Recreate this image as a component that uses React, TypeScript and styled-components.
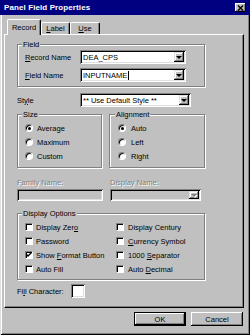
import styled, { createGlobalStyle } from 'styled-components';

const GlobalStyle = createGlobalStyle`
  html, body {
    margin: 0;
    padding: 0;
    background: #c0c0c0;
  }
  body {
    font-family: "Liberation Sans", Arial, sans-serif;
    font-size: 7.5px;
    color: #000;
  }
`;

const Window = styled.div`
  width: 250px;
  height: 335px;
  box-sizing: border-box;
  background: #c0c0c0;
  display: flex;
  flex-direction: column;
  overflow: hidden;
  box-shadow: inset 1px 0 #dfdfdf, inset -1px -1px #000, inset 2px 0 #fff, inset -2px -2px #808080;
`;

const TitleBar = styled.div`
  height: 15px;
  flex: none;
  background: #000080;
  display: flex;
  align-items: center;
  justify-content: space-between;
  padding: 0 4px 0 4px;
`;

const Title = styled.span`
  color: #fff;
  font-weight: bold;
  font-size: 8px;
  letter-spacing: 0.1px;
`;

const CloseButton = styled.div`
  width: 11px;
  height: 9px;
  background: #c0c0c0;
  display: flex;
  align-items: center;
  justify-content: center;
  box-shadow: inset -1px -1px #000, inset 1px 1px #fff, inset -2px -2px #808080;
`;

const Content = styled.div`
  flex: 1;
  display: flex;
  flex-direction: column;
  padding: 0 6px 0 4px;
`;

const TabStrip = styled.div`
  display: flex;
  align-items: flex-end;
  height: 15px;
  margin-top: 4px;
  padding-left: 3px;
`;

const Tab = styled.div<{ $active?: boolean; $w: number }>`
  width: ${(p) => p.$w}px;
  height: ${(p) => (p.$active ? 16 : 12)}px;
  margin-bottom: ${(p) => (p.$active ? -1 : 0)}px;
  box-sizing: border-box;
  background: #c0c0c0;
  border-top: 1px solid #fff;
  border-left: 1px solid #fff;
  border-right: 1px solid #000;
  border-radius: 2px 2px 0 0;
  box-shadow: inset -1px 0 #808080;
  display: flex;
  align-items: ${(p) => (p.$active ? 'flex-start' : 'center')};
  padding-top: ${(p) => (p.$active ? 3 : 0)}px;
  justify-content: center;
  z-index: ${(p) => (p.$active ? 1 : 0)};
`;

const Panel = styled.div`
  height: 274px;
  box-sizing: border-box;
  border-top: 1px solid #fff;
  border-left: 1px solid #fff;
  border-right: 1px solid #000;
  border-bottom: 1px solid #000;
  box-shadow: inset -1px -1px #808080;
  padding: 0 0 0 12px;
  display: flex;
  flex-direction: column;
`;

const GroupBox = styled.fieldset<{ $w: number; $pad: string; $mt: number }>`
  margin: ${(p) => p.$mt}px 0 0 0;
  width: ${(p) => p.$w}px;
  min-width: 0;
  box-sizing: border-box;
  padding: ${(p) => p.$pad};
  border: 1px solid #808080;
  box-shadow: inset 1px 1px #fff, 1px 1px #fff;
`;

const Legend = styled.legend`
  padding: 0 1px;
  margin-left: -3px;
  line-height: 9px;
  height: 9px;
  background: #c0c0c0;
`;

const FieldRow = styled.div`
  display: flex;
  align-items: center;
  height: 14px;
  & + & {
    margin-top: 4px;
  }
`;

const RowLabel = styled.span<{ $w: number }>`
  width: ${(p) => p.$w}px;
  flex: none;
`;

const Sunken = styled.div<{ $w: number; $h?: number; $disabled?: boolean }>`
  width: ${(p) => p.$w}px;
  height: ${(p) => p.$h ?? 14}px;
  flex: none;
  box-sizing: border-box;
  background: ${(p) => (p.$disabled ? '#c0c0c0' : '#fff')};
  box-shadow: inset 1px 1px #808080, inset -1px -1px #fff, inset 2px 2px #000, inset -2px -2px #dfdfdf;
  display: flex;
  align-items: center;
  padding-left: 3px;
  overflow: hidden;
  white-space: nowrap;
`;

const ComboText = styled.span`
  flex: 1;
  overflow: hidden;
  display: flex;
  align-items: center;
`;

const Caret = styled.span`
  display: inline-block;
  width: 1px;
  height: 9px;
  background: #000;
  margin-left: 1px;
`;

const DropButton = styled.div<{ $disabled?: boolean; $h?: number }>`
  width: 10px;
  height: ${(p) => p.$h ?? 10}px;
  flex: none;
  margin-right: 2px;
  background: #c0c0c0;
  box-shadow: inset -1px -1px #000, inset 1px 1px #dfdfdf, inset -2px -2px #808080, inset 2px 2px #fff;
  display: flex;
  align-items: center;
  justify-content: center;
  &::after {
    content: "";
    width: 0;
    height: 0;
    border-left: 3px solid transparent;
    border-right: 3px solid transparent;
    border-top: 3px solid ${(p) => (p.$disabled ? '#808080' : '#000')};
    filter: ${(p) => (p.$disabled ? 'drop-shadow(1px 1px 0 #fff)' : 'none')};
  }
`;

const StyleRow = styled.div`
  display: flex;
  align-items: center;
  height: 14px;
  margin-top: 6px;
`;

const TwoCol = styled.div<{ $mt: number }>`
  display: flex;
  gap: 7px;
  margin-top: ${(p) => p.$mt}px;
`;

const Option = styled.div<{ $gap?: number }>`
  display: flex;
  align-items: center;
  height: 14px;
  gap: ${(p) => p.$gap ?? 4}px;
  white-space: nowrap;
`;

const Radio = styled.span<{ $on?: boolean }>`
  width: 8px;
  height: 8px;
  flex: none;
  box-sizing: border-box;
  border-radius: 50%;
  background: #fff;
  border: 1px solid;
  border-color: #808080 #fff #fff #808080;
  box-shadow: inset 1px 1px #000;
  display: flex;
  align-items: center;
  justify-content: center;
  &::after {
    content: "";
    width: 3px;
    height: 3px;
    border-radius: 50%;
    background: ${(p) => (p.$on ? '#000' : 'transparent')};
  }
`;

const Check = styled.span`
  width: 8px;
  height: 8px;
  flex: none;
  box-sizing: border-box;
  background: #fff;
  border: 1px solid;
  border-color: #808080 #fff #fff #808080;
  box-shadow: inset 1px 1px #000;
  display: flex;
  align-items: center;
  justify-content: center;
`;

const NameCol = styled.div<{ $w: number }>`
  width: ${(p) => p.$w}px;
  display: flex;
  flex-direction: column;
  gap: 2px;
`;

const Disabled = styled.span`
  color: #808080;
  text-shadow: 1px 1px 0 #fff;
  line-height: 9px;
  height: 9px;
`;

const OptionGrid = styled.div`
  display: grid;
  grid-template-columns: 91px 1fr;
  grid-auto-rows: 14px;
`;

const FillRow = styled.div`
  display: flex;
  align-items: center;
  height: 14px;
  margin-top: 4px;
`;

const ButtonRow = styled.div`
  display: flex;
  justify-content: flex-end;
  gap: 5px;
  margin-top: 4px;
  padding-right: 1px;
`;

const Button = styled.div<{ $default?: boolean }>`
  width: 52px;
  height: 14px;
  box-sizing: border-box;
  background: #c0c0c0;
  display: flex;
  align-items: center;
  justify-content: center;
  border: ${(p) => (p.$default ? '1px solid #000' : 'none')};
  box-shadow: inset -1px -1px #000, inset 1px 1px #fff, inset -2px -2px #808080;
`;

const CheckMark = () => (
  <svg width="6" height="6" viewBox="0 0 6 6">
    <polyline points="0.5,2.5 2,4 5.5,0.5" fill="none" stroke="#000" strokeWidth="1.4" />
  </svg>
);

const CloseGlyph = () => (
  <svg width="7" height="6" viewBox="0 0 7 6">
    <path d="M1 0.5 L6 5.5 M6 0.5 L1 5.5" stroke="#000" strokeWidth="1.4" />
  </svg>
);

const sizes = ['Average', 'Maximum', 'Custom'];
const aligns = ['Auto', 'Left', 'Right'];

const options: { label: React.ReactNode; on?: boolean }[] = [
  { label: <>Display Zer<u>o</u></> },
  { label: <>Display Century</> },
  { label: <>Password</> },
  { label: <><u>C</u>urrency Symbol</> },
  { label: <>Show <u>F</u>ormat Button</>, on: true },
  { label: <>1000 <u>S</u>eparator</> },
  { label: <>Auto Fill</> },
  { label: <>Auto <u>D</u>ecimal</> },
];

export default function App() {
  return (
    <>
      <GlobalStyle />
      <Window>
        <TitleBar>
          <Title>Panel Field Properties</Title>
          <CloseButton>
            <CloseGlyph />
          </CloseButton>
        </TitleBar>
        <Content>
          <TabStrip>
            <Tab $active $w={34}>Record</Tab>
            <Tab $w={29}><u>L</u>abel</Tab>
            <Tab $w={30}><u>U</u>se</Tab>
          </TabStrip>
          <Panel>
            <GroupBox $w={188} $pad="1px 7px 4px 7px" $mt={5}>
              <Legend>Field</Legend>
              <FieldRow>
                <RowLabel $w={55}><u>R</u>ecord Name</RowLabel>
                <Sunken $w={106}>
                  <ComboText>DEA_CPS</ComboText>
                  <DropButton />
                </Sunken>
              </FieldRow>
              <FieldRow>
                <RowLabel $w={55}><u>F</u>ield Name</RowLabel>
                <Sunken $w={106}>
                  <ComboText>INPUTNAME<Caret /></ComboText>
                  <DropButton />
                </Sunken>
              </FieldRow>
            </GroupBox>

            <StyleRow>
              <RowLabel $w={63}>St<u>y</u>le</RowLabel>
              <Sunken $w={111}>
                <ComboText>** Use Default Style **</ComboText>
                <DropButton />
              </Sunken>
            </StyleRow>

            <TwoCol $mt={3}>
              <GroupBox $w={85} $pad="2px 7px 4px 7px" $mt={0}>
                <Legend>Size</Legend>
                {sizes.map((s, i) => (
                  <Option key={s}>
                    <Radio $on={i === 0} />
                    {s}
                  </Option>
                ))}
              </GroupBox>
              <GroupBox $w={96} $pad="2px 8px 4px 8px" $mt={0}>
                <Legend>Alignment</Legend>
                {aligns.map((s, i) => (
                  <Option key={s} $gap={5}>
                    <Radio $on={i === 0} />
                    {s}
                  </Option>
                ))}
              </GroupBox>
            </TwoCol>

            <TwoCol $mt={10}>
              <NameCol $w={86}>
                <Disabled>Family Name:</Disabled>
                <Sunken $w={86} $h={12} $disabled />
              </NameCol>
              <NameCol $w={91}>
                <Disabled>Display Name:</Disabled>
                <Sunken $w={91} $h={12} $disabled>
                  <ComboText />
                  <DropButton $disabled $h={8} />
                </Sunken>
              </NameCol>
            </TwoCol>

            <GroupBox $w={188} $pad="2px 7px 3px 7px" $mt={8}>
              <Legend>Display Options</Legend>
              <OptionGrid>
                {options.map((o, i) => (
                  <Option key={i} $gap={i % 2 === 0 ? 3 : 4}>
                    <Check>{o.on && <CheckMark />}</Check>
                    <span>{o.label}</span>
                  </Option>
                ))}
              </OptionGrid>
            </GroupBox>

            <FillRow>
              <RowLabel $w={54}>Fi<u>l</u>l Character:</RowLabel>
              <Sunken $w={14} />
            </FillRow>
          </Panel>
          <ButtonRow>
            <Button $default>OK</Button>
            <Button>Cancel</Button>
          </ButtonRow>
        </Content>
      </Window>
    </>
  );
}
